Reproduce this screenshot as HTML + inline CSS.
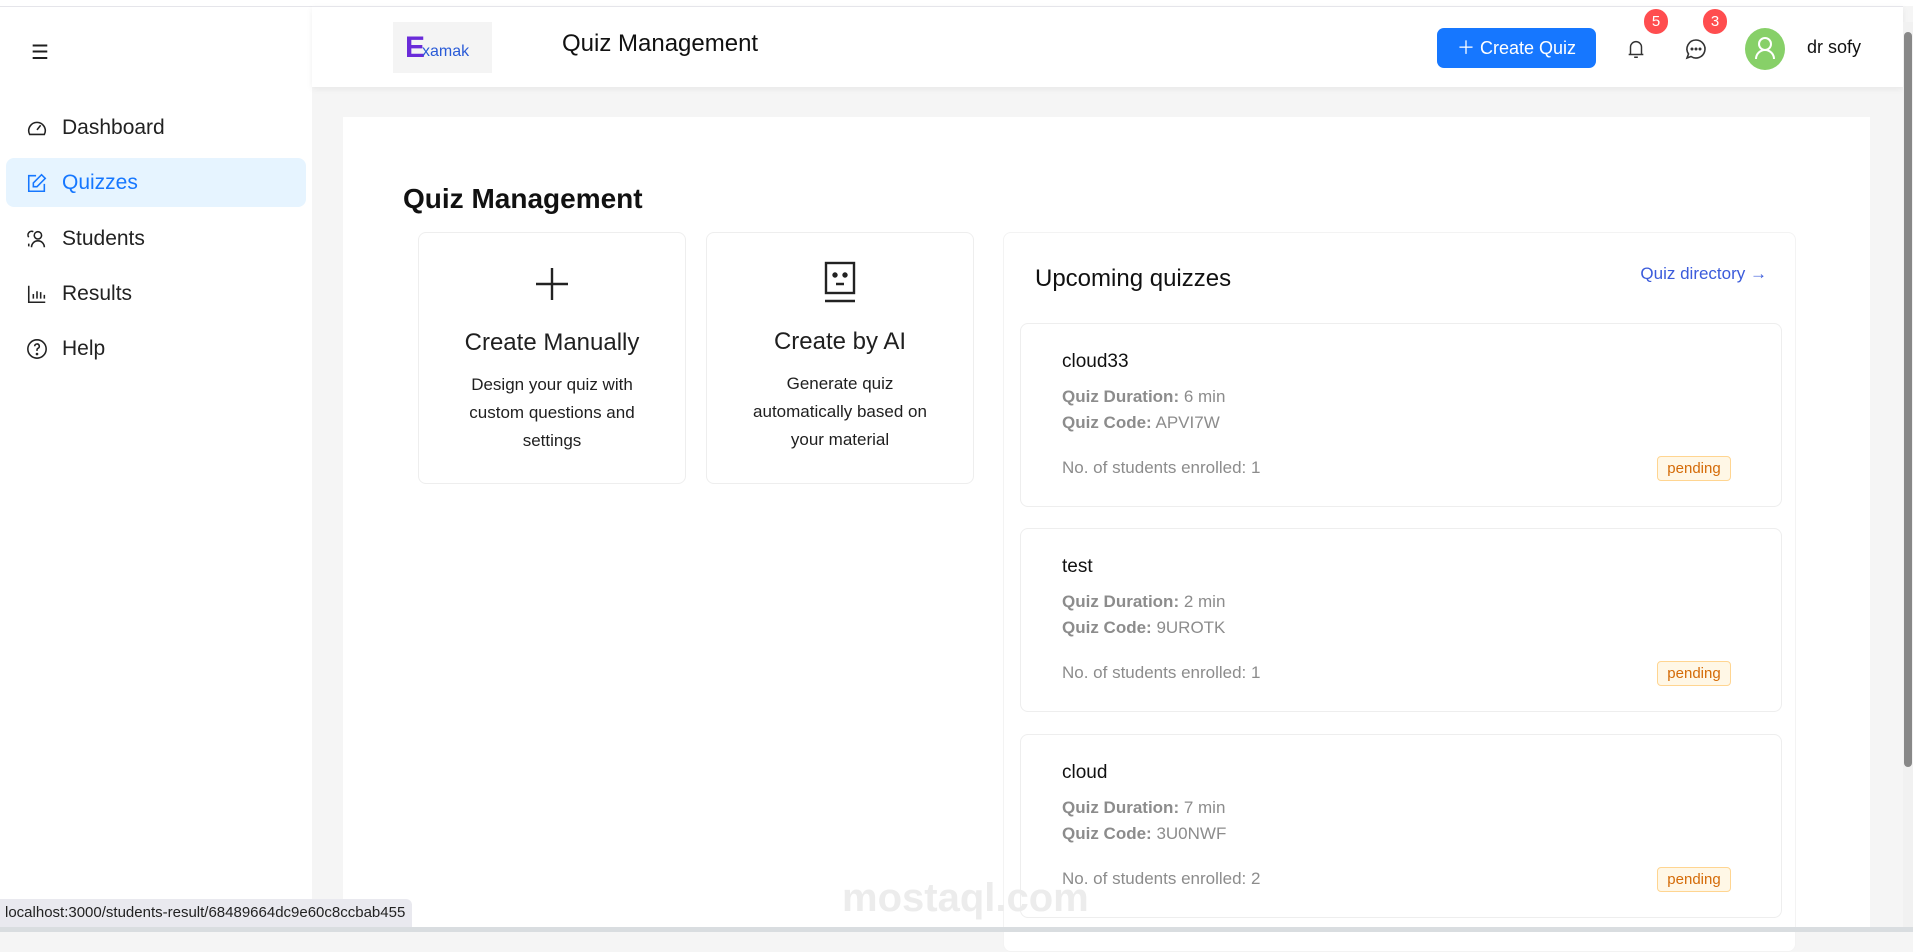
<!DOCTYPE html>
<html><head><meta charset="utf-8"><style>
*{box-sizing:border-box;margin:0;padding:0}
body{width:1913px;height:932px;overflow:hidden;background:#f5f5f5;font-family:"Liberation Sans",sans-serif;color:#1f1f1f;position:relative}
.abs{position:absolute}
.side{left:0;top:6px;width:312px;height:926px;background:#fff;border-top:1px solid #e5e5ea}
.mi{position:absolute;left:6px;width:300px;height:49px;display:flex;align-items:center;padding-left:20px;font-size:21px;color:#222}
.mi svg{margin-right:14px}
.mi.act{background:#e6f4ff;color:#1677ff;border-radius:8px}
.hdr{left:312px;top:6px;width:1591px;height:81px;background:#fff;box-shadow:0 2px 6px rgba(0,0,0,.06);border-top:1px solid #e5e5ea}
.card{position:absolute;background:#fff;border:1px solid #eee;border-radius:8px}
.qc{left:16px;width:762px;height:184px}
.qc .t{position:absolute;left:41px;top:27px;font-size:19px;color:#111}
.qc .d{position:absolute;left:41px;top:60px;font-size:17px;color:#8c8c8c;line-height:26px}
.qc .d b{color:#8c8c8c}
.qc .e{position:absolute;left:41px;top:134px;font-size:17px;color:#8c8c8c}
.qc .p{position:absolute;left:636px;top:132px;width:74px;height:25px;border:1px solid #ffd591;background:#fff7e6;color:#d46b08;border-radius:4px;font-size:15px;text-align:center;line-height:23px}
.badge{position:absolute;width:24px;height:25px;border-radius:12px;background:#ff4d4f;color:#fff;font-size:15px;text-align:center;line-height:25px}
</style></head><body>
<div class="abs" style="left:0;top:0;width:1913px;height:6px;background:#fff"></div>
<div class="abs side">
 <div class="abs" style="left:31px;top:33px;font-size:20px">☰</div>
 <div class="mi" style="top:96px"><svg width="22" height="22" viewBox="0 0 24 24" fill="none" stroke="#222" stroke-width="1.7"><path d="M4 19a9 9 0 1 1 16 0z"/><path d="M12 14l4-5"/></svg>Dashboard</div>
 <div class="mi act" style="top:151px"><svg width="22" height="22" viewBox="0 0 24 24" fill="none" stroke="#1677ff" stroke-width="1.7"><path d="M20 13v8H3V4h8"/><path d="M17 3l4 4-9 9H8v-4z"/></svg>Quizzes</div>
 <div class="mi" style="top:207px"><svg width="22" height="22" viewBox="0 0 24 24" fill="none" stroke="#222" stroke-width="1.7"><circle cx="13" cy="8" r="4"/><path d="M6 21a7 7 0 0 1 14 0M8 4a4 4 0 0 0-5 6M3 17v3"/></svg>Students</div>
 <div class="mi" style="top:262px"><svg width="22" height="22" viewBox="0 0 24 24" fill="none" stroke="#222" stroke-width="1.7"><path d="M3 3v18h18M8 17v-5M12 17V9M16 17v-7M20 17v-4"/></svg>Results</div>
 <div class="mi" style="top:317px"><svg width="22" height="22" viewBox="0 0 24 24" fill="none" stroke="#222" stroke-width="1.7"><circle cx="12" cy="12" r="10"/><path d="M9.5 9a2.5 2.5 0 1 1 3.5 2.3c-.7.4-1 1-1 1.7v1"/><circle cx="12" cy="17.5" r=".6" fill="#222"/></svg>Help</div>
</div>
<div class="abs hdr">
 <div class="abs" style="left:81px;top:15px;width:99px;height:51px;background:#f4f4f4;display:flex;align-items:center;padding-left:12px">
  <span style="font-size:30px;font-weight:bold;color:#6a2bd9">E</span><span style="font-size:16px;color:#2a5bd7;margin-left:-3px;margin-top:8px">xamak</span>
 </div>
 <div class="abs" style="left:250px;top:23px;font-size:24px;color:#111">Quiz Management</div>
 <div class="abs" style="left:1125px;top:21px;width:159px;height:40px;background:#1677ff;border-radius:7px;color:#fff;font-size:18px;line-height:40px;text-align:center">＋ Create Quiz</div>
 <svg class="abs" style="left:1313px;top:30px" width="22" height="24" viewBox="0 0 24 24" fill="none" stroke="#333" stroke-width="1.6"><path d="M6 18V10a6 6 0 0 1 12 0v8zM4 18h16M10 21h4"/></svg>
 <div class="badge" style="left:1332px;top:2px">5</div>
 <svg class="abs" style="left:1372px;top:30px" width="24" height="24" viewBox="0 0 24 24" fill="none" stroke="#333" stroke-width="1.6"><path d="M12 3a9 9 0 1 1-5 16.5L3 21l1.5-4A9 9 0 0 1 12 3z"/><circle cx="8" cy="12" r=".7" fill="#333"/><circle cx="12" cy="12" r=".7" fill="#333"/><circle cx="16" cy="12" r=".7" fill="#333"/></svg>
 <div class="badge" style="left:1391px;top:2px">3</div>
 <div class="abs" style="left:1433px;top:21px;width:40px;height:42px;border-radius:50%;background:#87d068"><svg width="40" height="42" viewBox="0 0 40 42" fill="none" stroke="#fff" stroke-width="2"><circle cx="20" cy="16" r="6"/><path d="M11 31a9 9 0 0 1 18 0"/></svg></div>
 <div class="abs" style="left:1495px;top:30px;font-size:18px;color:#111">dr sofy</div>
</div>
<div class="abs" style="left:1903px;top:22px;width:10px;height:910px;background:#f1f1f1"><div style="margin:10px 1px;width:8px;height:735px;background:#888;border-radius:4px"></div></div>
<div class="abs" style="left:343px;top:117px;width:1527px;height:815px;background:#fff">
 <div class="abs" style="left:60px;top:66px;font-size:28px;font-weight:bold;color:#111">Quiz Management</div>
 <div class="card" style="left:75px;top:115px;width:268px;height:252px;text-align:center">
  <svg style="margin-top:33px" width="36" height="36" viewBox="0 0 36 36" stroke="#222" stroke-width="2.4"><path d="M18 2v32M2 18h32"/></svg>
  <div style="font-size:24px;margin-top:22px">Create Manually</div>
  <div style="font-size:17px;line-height:28px;margin-top:14px">Design your quiz with<br>custom questions and<br>settings</div>
 </div>
 <div class="card" style="left:363px;top:115px;width:268px;height:252px;text-align:center">
  <svg style="margin-top:28px" width="40" height="42" viewBox="0 0 40 42" fill="none" stroke="#222" stroke-width="2.4"><rect x="6" y="2" width="28" height="30"/><path d="M5 40h30M16 23h8"/><circle cx="15" cy="14" r="1.5" fill="#222"/><circle cx="25" cy="14" r="1.5" fill="#222"/></svg>
  <div style="font-size:24px;margin-top:20px">Create by AI</div>
  <div style="font-size:17px;line-height:28px;margin-top:14px">Generate quiz<br>automatically based on<br>your material</div>
 </div>
 <div class="card" style="left:660px;top:115px;width:793px;height:720px;border-color:#f3f3f3">
  <div class="abs" style="left:31px;top:32px;font-size:24px;color:#111">Upcoming quizzes</div>
  <div class="abs" style="right:28px;top:31px;font-size:17px;color:#3b5bdb">Quiz directory →</div>
  <div class="card qc" style="top:90px"><div class="t">cloud33</div><div class="d"><b>Quiz Duration:</b> 6 min<br><b>Quiz Code:</b> APVI7W</div><div class="e">No. of students enrolled: 1</div><div class="p">pending</div></div>
  <div class="card qc" style="top:295px"><div class="t">test</div><div class="d"><b>Quiz Duration:</b> 2 min<br><b>Quiz Code:</b> 9UROTK</div><div class="e">No. of students enrolled: 1</div><div class="p">pending</div></div>
  <div class="card qc" style="top:501px"><div class="t">cloud</div><div class="d"><b>Quiz Duration:</b> 7 min<br><b>Quiz Code:</b> 3U0NWF</div><div class="e">No. of students enrolled: 2</div><div class="p">pending</div></div>
 </div>
</div>
<div class="abs" style="left:842px;top:876px;font-size:40px;color:#ececec;font-weight:bold">mostaql.com</div>
<div class="abs" style="left:0;top:899px;width:412px;height:28px;background:#e9e9ef;border-radius:0 6px 0 0;font-size:15px;color:#222;line-height:28px;padding-left:5px">localhost:3000/students-result/68489664dc9e60c8ccbab455</div>
<div class="abs" style="left:0;top:927px;width:1913px;height:5px;background:#d9dde0"></div>
</body></html>
